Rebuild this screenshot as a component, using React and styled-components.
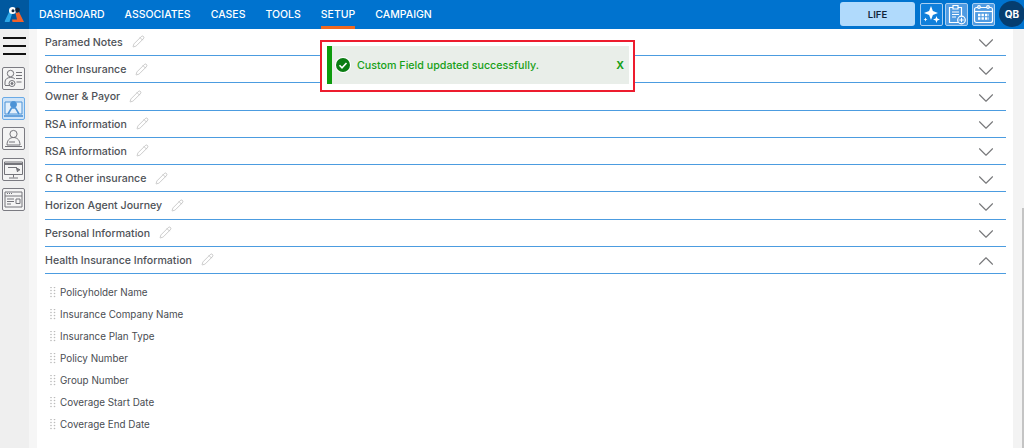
import React from "react";
import styled, { createGlobalStyle } from "styled-components";
import { ChevronDown, ChevronUp, Pencil } from "lucide-react";

const GlobalStyle = createGlobalStyle`
  html, body { margin: 0; padding: 0; height: 100%; overflow: hidden; background: #f3f3f3; }
  body { font-family: Inter, "Noto Sans", sans-serif; }
`;

const Page = styled.div`
  position: relative;
  width: 1024px;
  height: 448px;
  display: flex;
  flex-direction: column;
  overflow: hidden;
`;

const TopBar = styled.header`
  height: 28.85px;
  flex: none;
  display: flex;
  align-items: center;
  background: #0073cf;
`;

const LogoBox = styled.div`
  width: 29px;
  height: 29px;
  background: #00589f;
  display: flex;
  align-items: center;
  justify-content: center;
`;

const Nav = styled.nav`
  display: flex;
  gap: 20px;
  margin-left: 10px;
  flex: 1;
`;

const NavItem = styled.a`
  position: relative;
  color: #fff;
  font-size: 10.5px;
  font-weight: 500;
  line-height: 29px;
  ${({ $active }) => $active && `
    &::after {
      content: "";
      position: absolute;
      left: 0;
      right: 0;
      bottom: 0;
      height: 3px;
      background: #f0691f;
    }
  `}
`;

const LifeButton = styled.div`
  width: 75px;
  height: 24px;
  margin-right: 5px;
  border-radius: 3px;
  background: #b0dafc;
  color: #10243a;
  font-size: 9.5px;
  font-weight: 600;
  display: flex;
  align-items: center;
  justify-content: center;
`;

const IconTile = styled.div`
  width: 23px;
  height: 23px;
  margin-left: ${({ $gap }) => $gap || 0}px;
  border-radius: 2px;
  border: 1px solid #a9cff2;
  background: ${({ $fill }) => $fill || "transparent"};
  box-sizing: border-box;
  display: flex;
  align-items: center;
  justify-content: center;
`;

const Avatar = styled.div`
  width: 26px;
  height: 26px;
  margin-left: 4px;
  margin-right: -1px;
  flex: none;
  border-radius: 50%;
  background: #053d6f;
  color: #fff;
  font-size: 10px;
  font-weight: 700;
  display: flex;
  align-items: center;
  justify-content: center;
`;

const Body = styled.div`
  flex: 1;
  display: flex;
  min-height: 0;
`;

const Sidebar = styled.aside`
  width: 37px;
  flex: none;
  padding: 8px 0 0 2px;
  box-sizing: border-box;
  background: linear-gradient(to right, #efefef 29px, #f6f6f6 29px);
  display: flex;
  flex-direction: column;
  align-items: flex-start;
`;

const Burger = styled.div`
  width: 23px;
  height: 18px;
  margin-left: 1px;
  margin-bottom: 12px;
  display: flex;
  flex-direction: column;
  justify-content: space-between;
  span { display: block; height: 2px; background: #111; }
`;

const SideButton = styled.div`
  width: 23px;
  height: 23px;
  margin-bottom: 7.3px;
  box-sizing: border-box;
  border-radius: 2px;
  border: 1px solid ${({ $active }) => ($active ? "#6aaae6" : "#7b7b82")};
  background: ${({ $active }) => ($active ? "#cfe4f8" : "#f4f4f4")};
  display: flex;
  align-items: center;
  justify-content: center;
`;

const Main = styled.main`
  width: 976px;
  flex: none;
  box-sizing: border-box;
  padding: 0 7px 0 8px;
  background: #fff;
`;

const Gutter = styled.div`
  flex: 1;
  position: relative;
  background: #f3f3f3;
`;

const Thumb = styled.div`
  position: absolute;
  top: 179px;
  bottom: 0;
  right: 0;
  width: 2px;
  background: #c4c4c4;
`;

const Row = styled.div`
  height: 27.25px;
  box-sizing: border-box;
  display: flex;
  align-items: center;
  border-bottom: 1px solid #4c9ce0;
  padding-right: 7px;
`;

const RowTitle = styled.span`
  padding-top: 1px;
  font-size: 10.6px;
  font-weight: 500;
  color: #4e5257;
`;

const Edit = styled(Pencil)`
  margin-left: 9px;
  color: #a9a9a9;
`;

const Chevron = styled.span`
  margin-left: auto;
  margin-top: 3px;
  display: flex;
  color: #77787a;
`;

const List = styled.ul`
  list-style: none;
  margin: 0;
  padding: 7px 0 0 5px;
`;

const ListItem = styled.li`
  height: 22px;
  display: flex;
  align-items: center;
  gap: 4px;
  font-size: 9.85px;
  color: #494d52;
`;

const Toast = styled.div`
  position: absolute;
  left: 320px;
  top: 40px;
  width: 315px;
  height: 52px;
  box-sizing: border-box;
  border: 2px solid #ed1c2e;
  padding: 4px 4px 6px 5px;
  background: #fff;
`;

const ToastBody = styled.div`
  height: 100%;
  display: flex;
  align-items: center;
  box-sizing: border-box;
  background: #e9eee9;
  border-left: 5px solid #0e9b0e;
  padding: 0 5px 0 3px;
  color: #17a017;
  font-size: 10.7px;
  font-weight: 500;
`;

const ToastIcon = styled.svg`
  margin-right: 6px;
  flex: none;
`;

const Close = styled.span`
  margin-left: auto;
  font-size: 10.5px;
  font-weight: 700;
`;

const navItems = ["DASHBOARD", "ASSOCIATES", "CASES", "TOOLS", "SETUP", "CAMPAIGN"];

const sections = [
  "Paramed Notes",
  "Other Insurance",
  "Owner & Payor",
  "RSA information",
  "RSA information",
  "C R Other insurance",
  "Horizon Agent Journey",
  "Personal Information",
];

const fields = [
  "Policyholder Name",
  "Insurance Company Name",
  "Insurance Plan Type",
  "Policy Number",
  "Group Number",
  "Coverage Start Date",
  "Coverage End Date",
];

function Logo() {
  return (
    <svg width="21" height="19" viewBox="0 0 21 19">
      <path d="M7 3 L10 3 L5.500 17 L1 17 Q0.500 16.500 1 15.500 Z" fill="#2ba6e6" />
      <path d="M11.500 8 L15 7 L20 17 L8.500 17 L8 14.500 L13 14.500 Z" fill="#f2622a" />
      <circle cx="8.500" cy="5.500" r="3.500" fill="#fff" />
      <circle cx="9" cy="5.800" r="1.500" fill="#12263d" />
      <circle cx="13.500" cy="5" r="2.400" fill="#12263d" />
    </svg>
  );
}

function SideIcon({ kind }) {
  const c = kind === "presenter" ? "#4d93d6" : "#74747a";
  return (
    <svg width="21" height="21" viewBox="0 0 21 21" fill="none" stroke={c} strokeWidth="1">
      {kind === "settings" && (
        <>
          <circle cx="7.500" cy="5.500" r="3.200" />
          <path d="M2 17v-3c0-3 2.500-4.500 5.500-4.500 2 0 3.500.5 4.500 1.500" />
          <path d="M2 17.500h5" />
          <circle cx="9" cy="15.500" r="3" />
          <circle cx="9" cy="15.500" r="1" fill={c} />
          <path d="M13 4.500h6M13 7.500h6M13 10.500h6M13.500 14h5" />
        </>
      )}
      {kind === "presenter" && (
        <>
          <path d="M2 4h17v12H2z" fill="#e4f0fb" />
          <path d="M1 18h19" strokeWidth="1.600" />
          <circle cx="10.500" cy="6.500" r="3" fill="#4d93d6" />
          <path d="M5 16l3.500-6h4l3.500 6" strokeWidth="1.600" />
        </>
      )}
      {kind === "person" && (
        <>
          <circle cx="10.500" cy="6" r="3.600" />
          <path d="M4 17c0-4.500 2.500-7.500 6.500-7.500s6.500 3 6.500 7.500z" />
          <path d="M2 18.500h17" />
          <path d="M6 14h6" />
        </>
      )}
      {kind === "monitor" && (
        <>
          <path d="M1.500 3h18v12.500h-18zM10.500 15.500v3M6 19h9" />
          <path d="M1.500 5h18" strokeWidth="2" />
          <path d="M5 8.500h9" />
          <path d="M13.500 9l3.500 1.800-1.800.8-.7 1.400z" fill={c} />
        </>
      )}
      {kind === "window" && (
        <>
          <path d="M2 3h17v15H2zM2 7h17" />
          <path d="M4 4.500h1M6 4.500h1M8 4.500h1" />
          <path d="M4 10h7M4 12.500h7M4 15h4" />
          <path d="M13 10h4v4.500h-4z" />
        </>
      )}
    </svg>
  );
}

function DragDots() {
  return (
    <svg width="6" height="11" viewBox="0 0 6 11" fill="#bcbcbc">
      {[1, 4, 7, 10].map((y) => (
        <React.Fragment key={y}>
          <circle cx="1" cy={y - 0.5} r="0.8" />
          <circle cx="4.500" cy={y - 0.5} r="0.8" />
        </React.Fragment>
      ))}
    </svg>
  );
}

function CheckBadge() {
  return (
    <ToastIcon width="16" height="16" viewBox="0 0 16 16">
      <circle cx="8" cy="8" r="8" fill="#fff" />
      <circle cx="8" cy="8" r="7" fill="#0a7d12" />
      <path d="M4.500 8.300l2.500 2.500 4.500-4.800" fill="none" stroke="#fff" strokeWidth="1.600" />
    </ToastIcon>
  );
}

function AccordionRow({ title, open }) {
  return (
    <Row>
      <RowTitle>{title}</RowTitle>
      <Edit size={13} strokeWidth={1.1} />
      <Chevron>
        {open ? <ChevronUp size={26} strokeWidth={1} /> : <ChevronDown size={26} strokeWidth={1} />}
      </Chevron>
    </Row>
  );
}

export default function App() {
  return (
    <Page>
      <GlobalStyle />
      <TopBar>
        <LogoBox>
          <Logo />
        </LogoBox>
        <Nav>
          {navItems.map((item) => (
            <NavItem key={item} $active={item === "SETUP"}>
              {item}
            </NavItem>
          ))}
        </Nav>
        <LifeButton>LIFE</LifeButton>
        <IconTile $fill="#0f7fdb">
          <svg width="19" height="19" viewBox="0 0 19 19" fill="#fff">
            <path d="M9 1l1.900 5.100L16 8l-5.100 1.900L9 15 7.100 9.900 2 8l5.100-1.900z" />
            <path d="M14.500 11l.9 2.600 2.600.9-2.600.9-.9 2.600-.9-2.600-2.600-.9 2.600-.9z" />
            <path d="M3.500 12.500l.6 1.400 1.400.6-1.400.6-.6 1.400-.6-1.400-1.400-.6 1.400-.6z" />
          </svg>
        </IconTile>
        <IconTile $gap={2} $fill="#4f9be2">
          <svg width="21" height="21" viewBox="0 0 21 21" fill="none" stroke="#fff" strokeWidth="1.200">
            <path d="M3.500 3.500h12v15h-12z" />
            <path d="M7 1.500h5v3.500H7z" fill="#4f9be2" />
            <path d="M6 8h7M6 10.500h7M6 13h4" />
            <circle cx="15.500" cy="16" r="3.800" fill="#4f9be2" />
            <path d="M13.300 16h4.400M15.500 13.800v4.400" strokeWidth="1" />
          </svg>
        </IconTile>
        <IconTile $gap={4} $fill="#4f9be2">
          <svg width="21" height="21" viewBox="0 0 21 21" fill="none" stroke="#fff" strokeWidth="1.200">
            <rect x="1.500" y="3.500" width="18" height="15" rx="2" />
            <path d="M1.500 7.500h18" />
            <circle cx="6" cy="3" r="1.300" fill="#4f9be2" />
            <circle cx="15" cy="3" r="1.300" fill="#4f9be2" />
            <path d="M5 11h11M5 14.500h11" strokeWidth="2.400" strokeDasharray="2.400 1.100" />
          </svg>
        </IconTile>
        <Avatar>QB</Avatar>
      </TopBar>
      <Body>
        <Sidebar>
          <Burger>
            <span />
            <span />
            <span />
          </Burger>
          <SideButton>
            <SideIcon kind="settings" />
          </SideButton>
          <SideButton $active>
            <SideIcon kind="presenter" />
          </SideButton>
          <SideButton>
            <SideIcon kind="person" />
          </SideButton>
          <SideButton>
            <SideIcon kind="monitor" />
          </SideButton>
          <SideButton>
            <SideIcon kind="window" />
          </SideButton>
        </Sidebar>
        <Main>
          {sections.map((title, i) => (
            <AccordionRow key={i} title={title} />
          ))}
          <AccordionRow title="Health Insurance Information" open />
          <List>
            {fields.map((field) => (
              <ListItem key={field}>
                <DragDots />
                {field}
              </ListItem>
            ))}
          </List>
        </Main>
        <Gutter>
          <Thumb />
        </Gutter>
      </Body>
      <Toast>
        <ToastBody>
          <CheckBadge />
          Custom Field updated successfully.
          <Close>X</Close>
        </ToastBody>
      </Toast>
    </Page>
  );
}
